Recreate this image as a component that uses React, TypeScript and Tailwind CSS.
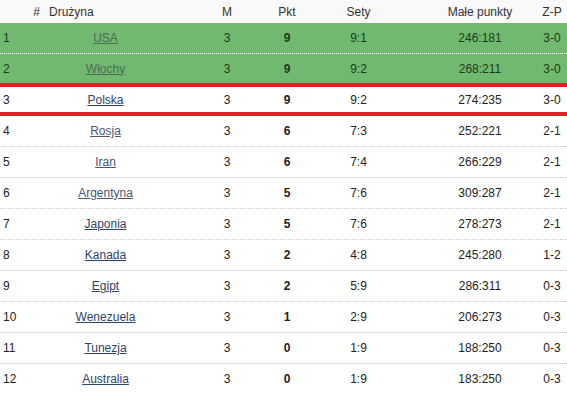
import React from "react";

type Row = { n: number; team: string; m: number; pkt: number; sety: string; male: string; zp: string };

const rows: Row[] = [
  { n: 1, team: "USA", m: 3, pkt: 9, sety: "9:1", male: "246:181", zp: "3-0" },
  { n: 2, team: "Włochy", m: 3, pkt: 9, sety: "9:2", male: "268:211", zp: "3-0" },
  { n: 3, team: "Polska", m: 3, pkt: 9, sety: "9:2", male: "274:235", zp: "3-0" },
  { n: 4, team: "Rosja", m: 3, pkt: 6, sety: "7:3", male: "252:221", zp: "2-1" },
  { n: 5, team: "Iran", m: 3, pkt: 6, sety: "7:4", male: "266:229", zp: "2-1" },
  { n: 6, team: "Argentyna", m: 3, pkt: 5, sety: "7:6", male: "309:287", zp: "2-1" },
  { n: 7, team: "Japonia", m: 3, pkt: 5, sety: "7:6", male: "278:273", zp: "2-1" },
  { n: 8, team: "Kanada", m: 3, pkt: 2, sety: "4:8", male: "245:280", zp: "1-2" },
  { n: 9, team: "Egipt", m: 3, pkt: 2, sety: "5:9", male: "286:311", zp: "0-3" },
  { n: 10, team: "Wenezuela", m: 3, pkt: 1, sety: "2:9", male: "206:273", zp: "0-3" },
  { n: 11, team: "Tunezja", m: 3, pkt: 0, sety: "1:9", male: "188:250", zp: "0-3" },
  { n: 12, team: "Australia", m: 3, pkt: 0, sety: "1:9", male: "183:250", zp: "0-3" },
];

const grid = "grid grid-cols-[45px_143px_78px_54px_120px_97px_30px]";

export default function App() {
  return (
    <div
      className="w-[567px] h-[401px] bg-white overflow-hidden text-[12px] leading-none"
      style={{ fontFamily: '"Liberation Sans", Arial, sans-serif' }}
    >
      <div className={`${grid} h-[23px] items-center bg-[#f9f9f9] text-[#333333]`}>
        <div className="text-right pr-[5px]">#</div>
        <div className="pl-[4px]">Drużyna</div>
        <div className="text-center">M</div>
        <div className="text-center pr-[12px]">Pkt</div>
        <div className="text-center pr-[43px]">Sety</div>
        <div className="text-center pr-[17px]">Małe punkty</div>
        <div className="text-center">Z-P</div>
      </div>
      {rows.map((r, i) => {
        const green = i < 2;
        let rowCls = "";
        if (i === 0) rowCls = "h-[31px] bg-[#71b96e] border-b border-dotted border-white text-[#203a20]";
        else if (i === 1) rowCls = "h-[33px] bg-[#71b96e] border-b-4 border-[#e31e24] text-[#203a20]";
        else if (i === 2) rowCls = "h-[29px] border-b-4 border-[#e31e24] text-[#222222]";
        else if (i === rows.length - 1) rowCls = "h-[30px] text-[#222222]";
        else rowCls = "h-[31px] border-b border-dotted border-[#c8c8c8] text-[#222222]";
        const linkCls = green
          ? "underline text-[#4d6b55]"
          : i >= 3 && i <= 5
          ? "underline text-[#4d5570]"
          : "underline text-[#2f4366]";
        return (
          <div key={r.n} className={`${grid} items-center ${rowCls}`}>
            <div className="pl-[3px]">{r.n}</div>
            <div className="text-center pr-[22px]">
              <a href="#" className={linkCls}>
                {r.team}
              </a>
            </div>
            <div className="text-center">{r.m}</div>
            <div className="text-center pr-[12px] font-bold">{r.pkt}</div>
            <div className="text-center pr-[43px]">{r.sety}</div>
            <div className="text-center pr-[17px]">{r.male}</div>
            <div className="text-center">{r.zp}</div>
          </div>
        );
      })}
    </div>
  );
}
